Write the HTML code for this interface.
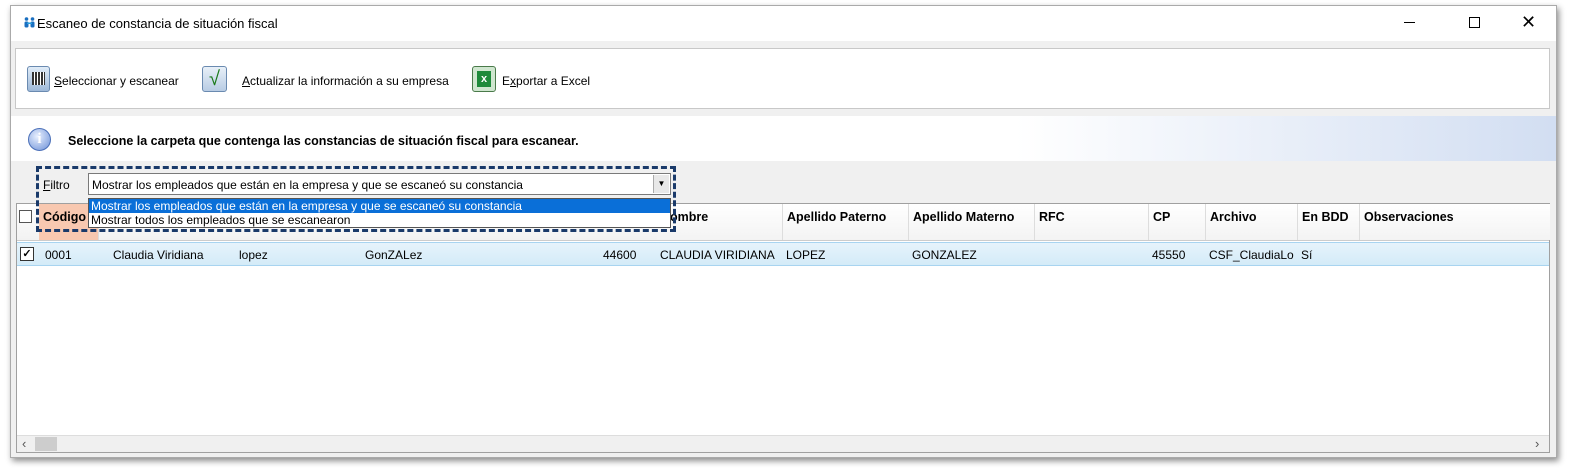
<!DOCTYPE html>
<html><head><meta charset="utf-8"><style>
*{margin:0;padding:0;box-sizing:border-box}
body{width:1572px;height:468px;background:#fff;font-family:"Liberation Sans",sans-serif;font-size:12px;color:#000;position:relative;overflow:hidden}
.win{position:absolute;left:10px;top:5px;width:1547px;height:453px;background:#f0f0f0;box-shadow:2px 3px 6px rgba(0,0,0,.45);border:1px solid #aaa}
.abs{position:absolute}
.title{left:0;top:0;width:100%;height:35px;background:#fff}
.tb{left:4px;top:42px;width:1535px;height:61px;background:#fff;border:1px solid #c8c8c8}
.info{left:0;top:110px;width:1545px;height:45px;background:linear-gradient(90deg,#fff 0%,#fff 65%,#d2def2 100%)}
.grid{left:5px;top:197px;width:1534px;height:250px;background:#fff;border:1px solid #a0a0a0}
.hd{position:absolute;top:0;height:36px;border-right:1px solid #ddd;font-weight:bold;padding:6px 4px;font-size:12.5px;background:linear-gradient(#fff,#f3f3f3)}
</style></head><body>
<div class="win">
 <div class="abs title">
  <svg class="abs" style="left:13px;top:11px" width="11" height="11" viewBox="0 0 11 11"><circle cx="2.5" cy="2" r="1.8" fill="#1a6fc0"/><circle cx="8.5" cy="2" r="1.8" fill="#1a6fc0"/><rect x="0.5" y="4.5" width="4" height="6" rx="1.5" fill="#1a6fc0"/><rect x="6.5" y="4.5" width="4" height="6" rx="1.5" fill="#1a6fc0"/><rect x="3" y="5.5" width="5" height="1.5" fill="#2aa0e0"/></svg>
  <div class="abs" style="left:26px;top:10px;font-size:13px">Escaneo de constancia de situación fiscal</div>
  <div class="abs" style="left:1393px;top:16px;width:11px;height:1px;background:#000"></div>
  <div class="abs" style="left:1458px;top:11px;width:11px;height:11px;border:1px solid #000"></div>
  <div class="abs" style="left:1510px;top:6px;font-size:18px;line-height:20px">✕</div>
 </div>
 <div class="abs tb">
  <div class="abs" style="left:11px;top:17px;width:23px;height:26px;border:1px solid #6a8ab0;border-radius:3px;background:linear-gradient(#e0ecf8,#9db8d8)"><div style="margin:5px 4px;width:13px;height:13px;background:repeating-linear-gradient(90deg,#333 0 2px,#fff 2px 3px)"></div></div>
  <div class="abs" style="left:38px;top:25px"><u>S</u>eleccionar y escanear</div>
  <div class="abs" style="left:186px;top:17px;width:25px;height:26px;border:1px solid #6a8ab0;border-radius:3px;background:linear-gradient(#e8f0f8,#b8cce4);color:#1a7a1a;font-size:20px;text-align:center;line-height:24px">√</div>
  <div class="abs" style="left:226px;top:25px"><u>A</u>ctualizar la información a su empresa</div>
  <div class="abs" style="left:456px;top:17px;width:24px;height:26px;border:1px solid #4a7a4a;border-radius:3px;background:#cfe6cf"><div style="margin:4px;width:14px;height:16px;background:#1e8a3a;color:#fff;font-weight:bold;font-size:11px;text-align:center;line-height:16px">x</div></div>
  <div class="abs" style="left:486px;top:25px">E<u>x</u>portar a Excel</div>
 </div>
 <div class="abs info">
  <div class="abs" style="left:17px;top:12px;width:23px;height:23px;border-radius:50%;background:radial-gradient(circle at 40% 35%,#e8f0ff,#6b8fd6);border:1px solid #4a6fb8;color:#fff;font-weight:bold;text-align:center;line-height:21px;font-family:'Liberation Serif',serif;font-size:15px">i</div>
  <div class="abs" style="left:57px;top:18px;font-weight:bold;font-size:12.5px">Seleccione la carpeta que contenga las constancias de situación fiscal para escanear.</div>
 </div>
 <div class="abs grid">
  <div class="abs" style="left:0;top:0;width:1532px;height:37px;background:linear-gradient(#fff,#f2f2f2);border-bottom:1px solid #ccc"></div>
  <div class="abs" style="left:2px;top:6px;width:13px;height:13px;border:1px solid #555;background:#fff"></div>
  <div class="hd" style="left:22px;width:60px;background:#f8c8b0">Código</div>
  <div class="hd" style="left:640px;width:126px">Nombre</div>
  <div class="hd" style="left:766px;width:126px">Apellido Paterno</div>
  <div class="hd" style="left:892px;width:126px">Apellido Materno</div>
  <div class="hd" style="left:1018px;width:114px">RFC</div>
  <div class="hd" style="left:1132px;width:57px">CP</div>
  <div class="hd" style="left:1189px;width:92px">Archivo</div>
  <div class="hd" style="left:1281px;width:62px">En BDD</div>
  <div class="hd" style="left:1343px;width:190px;border-right:none">Observaciones</div>
  <div class="abs" style="left:0;top:38px;width:1532px;height:24px;background:linear-gradient(#e6f3fb,#d4ebf8);border-top:1px solid #a8d4f0;border-bottom:1px solid #a8d4f0">
   <div class="abs" style="left:3px;top:4px;width:14px;height:14px;border:1px solid #333;background:#fff;font-size:11px;line-height:12px;text-align:center;font-weight:bold">✓</div>
   <div class="abs" style="left:28px;top:5px">0001</div>
   <div class="abs" style="left:96px;top:5px">Claudia Viridiana</div>
   <div class="abs" style="left:222px;top:5px">lopez</div>
   <div class="abs" style="left:348px;top:5px">GonZALez</div>
   <div class="abs" style="left:586px;top:5px">44600</div>
   <div class="abs" style="left:643px;top:5px">CLAUDIA VIRIDIANA</div>
   <div class="abs" style="left:769px;top:5px">LOPEZ</div>
   <div class="abs" style="left:895px;top:5px">GONZALEZ</div>
   <div class="abs" style="left:1135px;top:5px">45550</div>
   <div class="abs" style="left:1192px;top:5px">CSF_ClaudiaLo</div>
   <div class="abs" style="left:1284px;top:5px">Sí</div>
  </div>
  <div class="abs" style="left:0;top:231px;width:1532px;height:17px;background:#f0f0f0;border-top:1px solid #ddd">
   <div class="abs" style="left:5px;top:0;font-size:13px;color:#555">‹</div>
   <div class="abs" style="left:18px;top:1px;width:22px;height:14px;background:#cdcdcd"></div>
   <div class="abs" style="left:1518px;top:0;font-size:13px;color:#555">›</div>
  </div>
 </div>
 <div class="abs" style="left:32px;top:172px"><u>F</u>iltro</div>
 <div class="abs" style="left:77px;top:167px;width:583px;height:22px;background:#fff;border:1px solid #7a7a7a">
  <div class="abs" style="left:3px;top:4px">Mostrar los empleados que están en la empresa y que se escaneó su constancia</div>
  <div class="abs" style="right:1px;top:1px;width:16px;height:18px;background:#e8e8e8;border-left:1px solid #aaa;font-size:8px;text-align:center;line-height:18px">▼</div>
 </div>
 <div class="abs" style="left:77px;top:192px;width:583px;height:30px;background:#fff;border:1px solid #555">
  <div class="abs" style="left:0;top:0;width:581px;height:14px;background:#0a6fd8;color:#fff;padding-left:2px;line-height:14px">Mostrar los empleados que están en la empresa y que se escaneó su constancia</div>
  <div class="abs" style="left:2px;top:14px;line-height:14px">Mostrar todos los empleados que se escanearon</div>
 </div>
 <div class="abs" style="left:25px;top:160px;width:640px;height:66px;border:3px dashed #1a3a6a"></div>
</div>
</body></html>
